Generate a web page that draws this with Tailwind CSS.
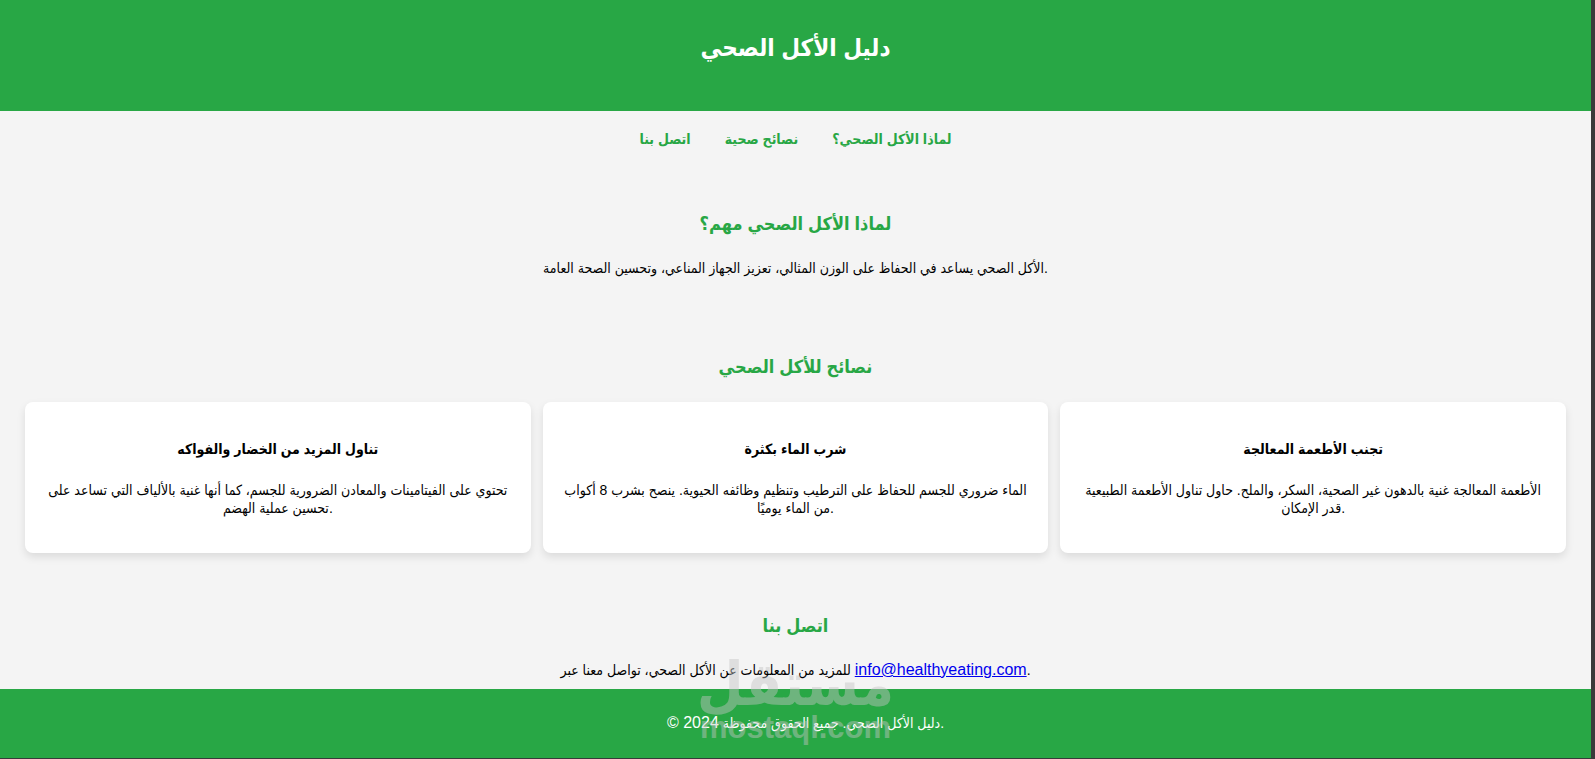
<!DOCTYPE html>
<html lang="ar" dir="ltr">
<head>
  <meta charset="UTF-8">
  <meta name="viewport" content="width=device-width, initial-scale=1.0">
  <title>دليل الأكل الصحي</title>
  <script src="https://cdn.jsdelivr.net/npm/@tailwindcss/browser@4"></script>
</head>
<body class="min-h-screen flex flex-col bg-[#f4f4f4] border-r-4 border-b border-[#3a3a3a] font-['Liberation_Sans','DejaVu_Sans_Condensed','DejaVu_Sans',sans-serif] text-sm leading-[18px] text-black text-center">
  <!-- Header -->
  <header class="bg-[#28a745] text-white pt-[30px] pb-[45px]">
    <h1 class="text-2xl leading-9 font-bold">دليل الأكل الصحي</h1>
  </header>

  <!-- Navigation -->
  <nav class="flex flex-row-reverse justify-center gap-[34px] pt-[19px] pb-5 font-bold text-[#28a745]">
    <a href="#why">لماذا الأكل الصحي؟</a>
    <a href="#tips">نصائح صحية</a>
    <a href="#contact">اتصل بنا</a>
  </nav>

  <main class="grow">
    <section id="why" class="px-[25px] pt-[41px] pb-[35px]">
      <h2 class="text-lg leading-[30px] font-bold text-[#28a745] mb-5">لماذا الأكل الصحي مهم؟</h2>
      <p>الأكل الصحي يساعد في الحفاظ على الوزن المثالي، تعزيز الجهاز المناعي، وتحسين الصحة العامة.</p>
    </section>

    <section id="tips" class="px-[25px] pt-10 pb-[18px]">
      <h2 class="text-lg leading-[30px] font-bold text-[#28a745] mb-5">نصائح للأكل الصحي</h2>
      <div class="grid grid-cols-1 md:grid-cols-3 gap-3">
        <div class="bg-white rounded-lg shadow-[0_4px_8px_rgba(0,0,0,0.1)] px-5 py-9">
          <h3 class="leading-[23px] font-bold mb-5">تناول المزيد من الخضار والفواكه</h3>
          <p>تحتوي على الفيتامينات والمعادن الضرورية للجسم، كما أنها غنية بالألياف التي تساعد على تحسين عملية الهضم.</p>
        </div>
        <div class="bg-white rounded-lg shadow-[0_4px_8px_rgba(0,0,0,0.1)] px-5 py-9">
          <h3 class="leading-[23px] font-bold mb-5">شرب الماء بكثرة</h3>
          <p>الماء ضروري للجسم للحفاظ على الترطيب وتنظيم وظائفه الحيوية. ينصح بشرب 8 أكواب من الماء يوميًا.</p>
        </div>
        <div class="bg-white rounded-lg shadow-[0_4px_8px_rgba(0,0,0,0.1)] px-5 py-9">
          <h3 class="leading-[23px] font-bold mb-5">تجنب الأطعمة المعالجة</h3>
          <p>الأطعمة المعالجة غنية بالدهون غير الصحية، السكر، والملح. حاول تناول الأطعمة الطبيعية قدر الإمكان.</p>
        </div>
      </div>
    </section>

    <section id="contact" class="px-[25px] pt-10 pb-2">
      <h2 class="text-lg leading-[30px] font-bold text-[#28a745] mb-5">اتصل بنا</h2>
      <p>للمزيد من المعلومات عن الأكل الصحي، تواصل معنا عبر <a href="mailto:info@healthyeating.com" class="text-base leading-[18px] text-[#0000ee] underline">info@healthyeating.com</a>.</p>
    </section>
  </main>

  <!-- Footer -->
  <footer class="relative bg-[#28a745] text-white pt-[25px] pb-[26px]">
    <p class="pl-5"><span class="text-base leading-[18px]">&copy; 2024</span> دليل الأكل الصحي. جميع الحقوق محفوظة.</p>
    <!-- Watermark -->
    <div class="absolute inset-x-0 bottom-[14px] opacity-45 text-[#c4c4c4] font-bold pointer-events-none">
      <div class="text-[60px] leading-[54px]">مستقل</div>
      <div class="text-[31px] leading-8">mostaql.com</div>
    </div>
  </footer>
</body>
</html>
